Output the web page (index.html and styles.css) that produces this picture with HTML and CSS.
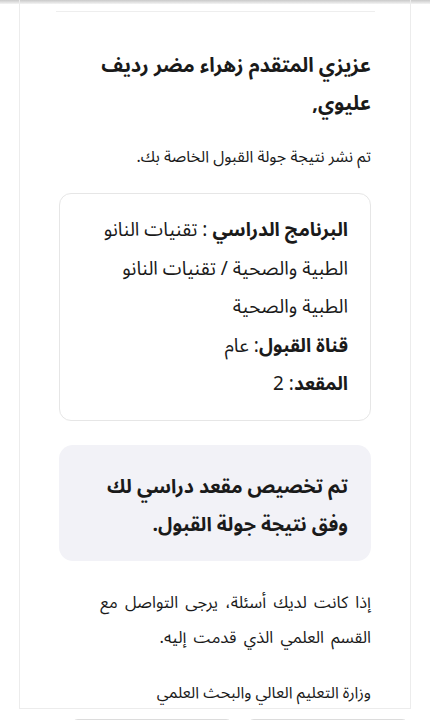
FILE: index.html
```html
<!DOCTYPE html>
<html lang="ar" dir="rtl">
<head>
<meta charset="utf-8">
<link rel="stylesheet" href="styles.css">
</head>
<body>
<div class="topshadow"></div>
<div class="card">
  <div class="divider"></div>
  <h1 class="greet">عزيزي المتقدم زهراء مضر رديف عليوي,</h1>
  <p class="lead">تم نشر نتيجة جولة القبول الخاصة بك.</p>
  <div class="info">
    <div class="row"><b>البرنامج الدراسي</b> : تقنيات النانو الطبية والصحية / تقنيات النانو الطبية والصحية</div>
    <div class="row"><b>قناة القبول</b>: عام</div>
    <div class="row"><b>المقعد</b>: 2</div>
  </div>
  <div class="notice">تم تخصيص مقعد دراسي لك وفق نتيجة جولة القبول.</div>
  <p class="contact">إذا كانت لديك أسئلة، يرجى التواصل مع القسم العلمي الذي قدمت إليه.</p>
  <p class="sign">وزارة التعليم العالي والبحث العلمي</p>
</div>
<div class="actions">
  <div class="btn"></div>
  <div class="btn"></div>
</div>
</body>
</html>
```
FILE: styles.css
```css
html, body {
  margin: 0;
  padding: 0;
  background: #ffffff;
}
body {
  font-family: "Noto Sans Arabic", "DejaVu Sans", sans-serif;
  color: #1a1a1a;
  overflow: hidden;
  height: 720px;
}
.topshadow {
  height: 4px;
  background: linear-gradient(#c9c9c9, #f4f4f4);
}
.card {
  margin: -4px 19px 0 19px;
  border: 1px solid #ececec;
  border-top: none;
  padding: 11px 39px 0 39px;
  height: 697px;
  overflow: hidden;
  box-sizing: content-box;
}
.divider {
  height: 1px;
  background: #eeeeee;
  margin: 0 -4px 0 -3px;
}
.greet {
  margin: 35px 0 0 0;
  font-size: 20px;
  line-height: 38px;
  font-weight: bold;
}
.lead {
  margin: 19px 0 0 0;
  font-size: 16px;
  line-height: 30px;
}
.info {
  margin-top: 21px;
  border: 1px solid #e6e6e6;
  border-radius: 12px;
  padding: 17px 22px 16px 22px;
  font-size: 19px;
  line-height: 38.5px;
}
.info b {
  font-weight: bold;
}
.notice {
  margin-top: 24px;
  background: #f2f2f7;
  border-radius: 14px;
  padding: 23px 23px 17px 23px;
  font-size: 19.5px;
  line-height: 38px;
  font-weight: bold;
}
.contact {
  margin: 24px 0 0 0;
  font-size: 16.5px;
  line-height: 35px;
  word-spacing: 3px;
}
.sign {
  margin: 20px 0 0 0;
  font-size: 16px;
  line-height: 36px;
}
.actions {
  display: flex;
  gap: 12px;
  padding: 0 20px 0 70px;
  margin-top: 10px;
}
.btn {
  flex: 1;
  height: 40px;
  border: 1px solid #dcdcdc;
  border-radius: 8px;
}
```
